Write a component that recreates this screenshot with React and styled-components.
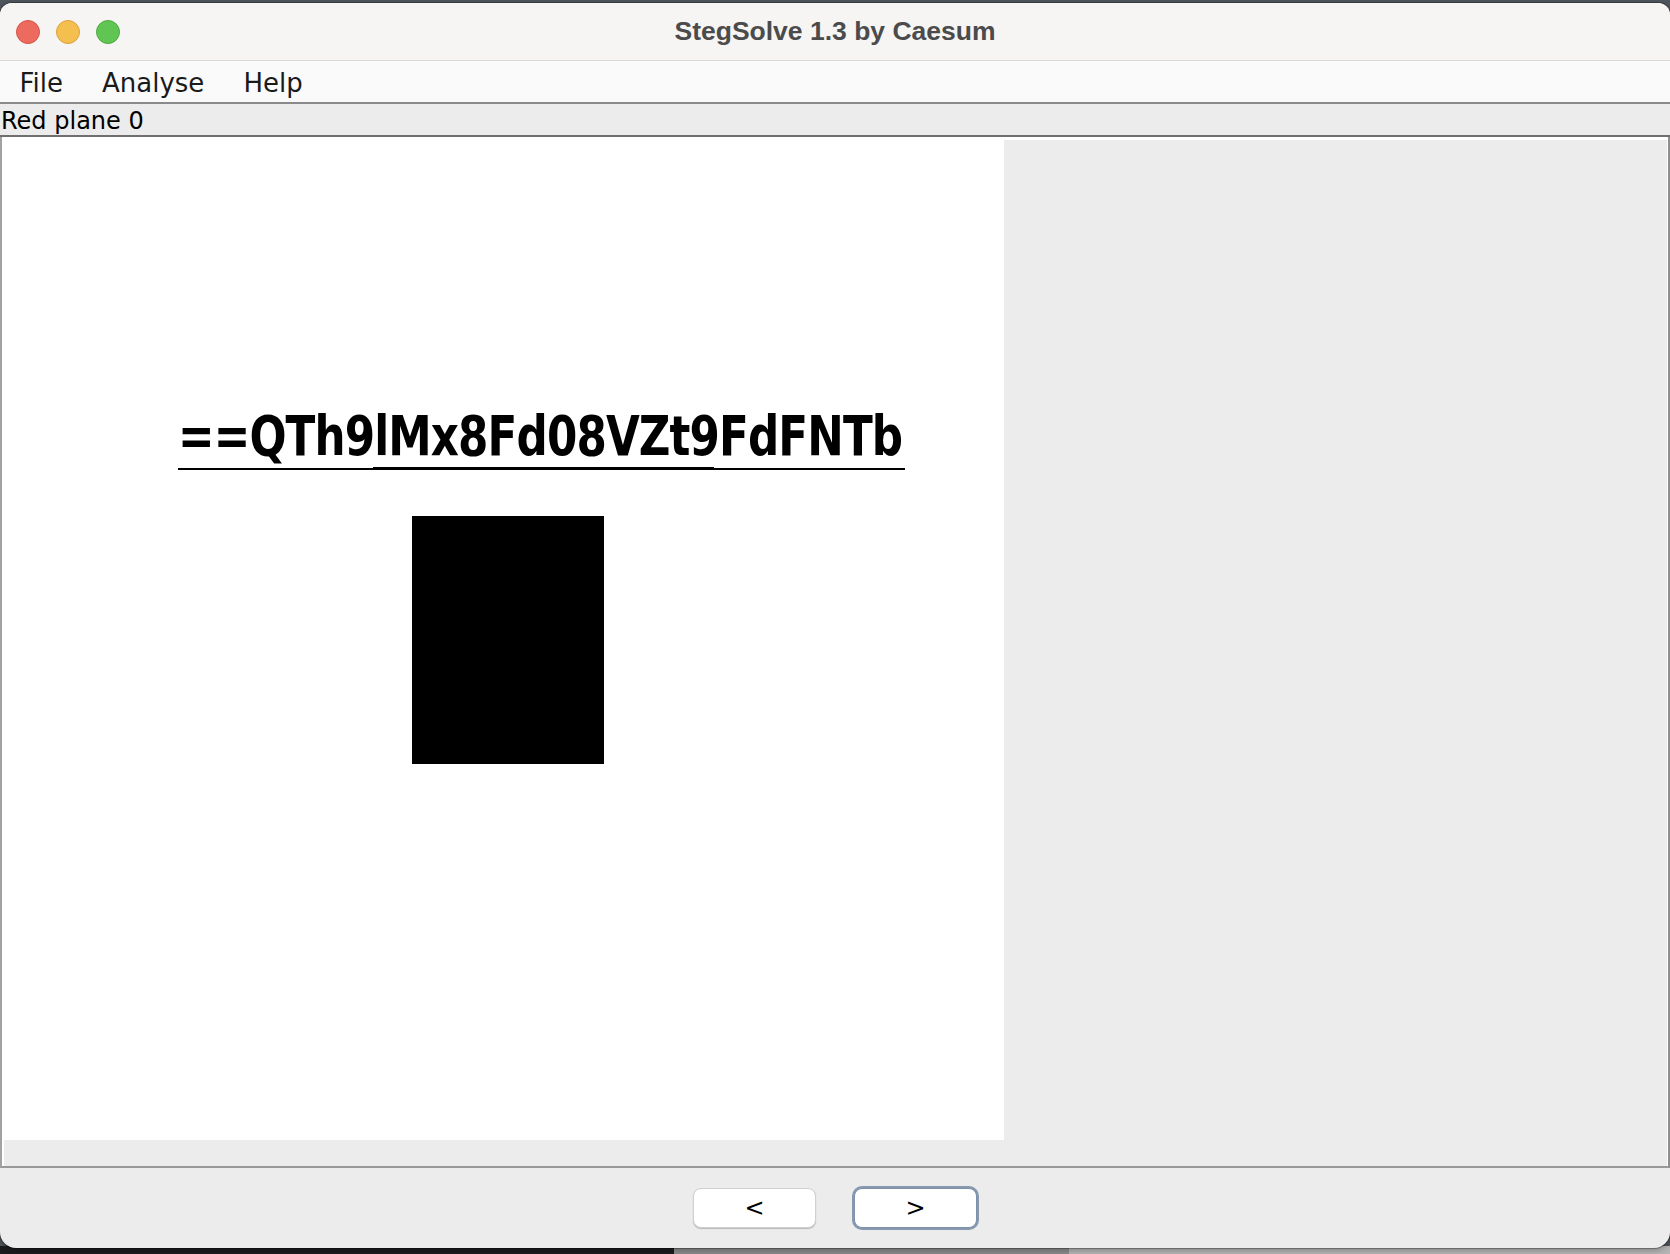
import styled, { createGlobalStyle } from 'styled-components';

const GlobalStyle = createGlobalStyle`
  html, body {
    margin: 0;
    padding: 0;
  }
  body {
    width: 1670px;
    height: 1254px;
    overflow: hidden;
    font-family: "DejaVu Sans", "Liberation Sans", sans-serif;
  }
`;

const Desktop = styled.div`
  width: 1670px;
  height: 1254px;
  padding-top: 3px;
  box-sizing: border-box;
  background:
    linear-gradient(to right, #1c1c1e 0 674px, #8b8b8b 674px 1069px, #b4b4b4 1069px) bottom / 100% 8px no-repeat,
    #4f555c;
`;

const Window = styled.div`
  width: 1670px;
  height: 1245px;
  display: flex;
  flex-direction: column;
  background: #ececec;
  border-radius: 12px 12px 16px 16px;
  overflow: hidden;
  box-shadow: 0 0 0 1px rgba(0, 0, 0, 0.25), 0 2px 6px rgba(0, 0, 0, 0.3);
`;

const TitleBar = styled.div`
  height: 57px;
  flex: none;
  display: grid;
  grid-template-columns: 1fr auto 1fr;
  align-items: center;
  background: #f6f5f4;
  border-bottom: 1px solid #d8d8d8;
`;

const Lights = styled.div`
  display: flex;
  gap: 16px;
  padding-left: 16px;
`;

const Light = styled.span`
  width: 24px;
  height: 24px;
  border-radius: 50%;
  box-sizing: border-box;
  background: ${(p) => p.color};
  border: 1px solid ${(p) => p.edge};
`;

const Title = styled.div`
  font-family: "Liberation Sans", Arial, sans-serif;
  font-weight: bold;
  font-size: 26.5px;
  color: #4b4b4b;
  white-space: nowrap;
`;

const MenuBar = styled.div`
  height: 43px;
  flex: none;
  box-sizing: border-box;
  padding-top: 3px;
  display: flex;
  background: #fafafa;
  border-bottom: 2px solid #8a8a8a;
`;

const MenuItem = styled.div`
  padding: 0 19.5px;
  font-size: 26px;
  line-height: 38px;
  color: #1a1a1a;
`;

const PlaneLabel = styled.div`
  height: 33px;
  flex: none;
  box-sizing: border-box;
  padding: 3px 0 0 1px;
  font-size: 24px;
  line-height: 28px;
  color: #000;
  background: #ececec;
  border-bottom: 2px solid #6f6f6f;
`;

const ScrollPane = styled.div`
  height: 1031px;
  flex: none;
  box-sizing: border-box;
  display: flex;
  border-left: 2px solid #a2a2a2;
  border-right: 2px solid #8e8e8e;
  border-bottom: 2px solid #999;
`;

const Viewport = styled.div`
  flex: 1;
  background: #ececec;
  border-top: 3px solid #fff;
  border-left: 2px solid #fff;
  border-right: 1px solid #fff;
`;

const Picture = styled.div`
  width: 1000px;
  height: 1000px;
  box-sizing: border-box;
  padding: 268px 0 0 174px;
  background: #fff;
`;

const Caption = styled.div`
  width: 727px;
  display: flex;
  flex-direction: column;
`;

const CaptionText = styled.div`
  height: 56px;
  font-family: "DejaVu Sans Condensed", "DejaVu Sans", sans-serif;
  font-stretch: condensed;
  font-weight: bold;
  font-size: 56px;
  line-height: 56px;
  letter-spacing: -1px;
  color: #000;
  white-space: nowrap;
  transform-origin: left center;
  transform: scaleX(0.866);
`;

const Underline = styled.div`
  margin-top: 3px;
  display: flex;
  align-items: flex-end;
`;

const Stroke = styled.span`
  width: ${(p) => p.w}px;
  height: ${(p) => p.h}px;
  background: #000;
`;

const Block = styled.div`
  margin: 46px 0 0 234px;
  width: 192px;
  height: 248px;
  background: #000;
`;

const ButtonBar = styled.div`
  flex: 1;
  display: flex;
  justify-content: center;
  align-items: center;
  gap: 38px;
`;

const NavButton = styled.button`
  width: 123px;
  height: 40px;
  padding: 0;
  font-family: "DejaVu Sans", sans-serif;
  font-size: 24px;
  color: #000;
  background: #fff;
  border-radius: 8px;
  border: 1px solid ${(p) => (p.focused ? '#7d90a8' : '#d0d0d0')};
  box-shadow: ${(p) =>
    p.focused ? '0 0 0 2px #8799af' : '0 1px 1px rgba(0, 0, 0, 0.22)'};
`;

export default function App() {
  return (
    <Desktop>
      <GlobalStyle />
      <Window>
        <TitleBar>
          <Lights>
            <Light color="#ed6a5e" edge="#d75449" />
            <Light color="#f5bf4f" edge="#d9a23a" />
            <Light color="#61c554" edge="#4ea940" />
          </Lights>
          <Title>StegSolve 1.3 by Caesum</Title>
          <div />
        </TitleBar>
        <MenuBar>
          <MenuItem>File</MenuItem>
          <MenuItem>Analyse</MenuItem>
          <MenuItem>Help</MenuItem>
        </MenuBar>
        <PlaneLabel>Red plane 0</PlaneLabel>
        <ScrollPane>
          <Viewport>
            <Picture>
              <Caption>
                <CaptionText>==QTh9lMx8Fd08VZt9FdFNTb</CaptionText>
                <Underline>
                  <Stroke w={195} h={2} />
                  <Stroke w={341} h={3} />
                  <Stroke w={191} h={2} />
                </Underline>
              </Caption>
              <Block />
            </Picture>
          </Viewport>
        </ScrollPane>
        <ButtonBar>
          <NavButton>&lt;</NavButton>
          <NavButton focused>&gt;</NavButton>
        </ButtonBar>
      </Window>
    </Desktop>
  );
}
